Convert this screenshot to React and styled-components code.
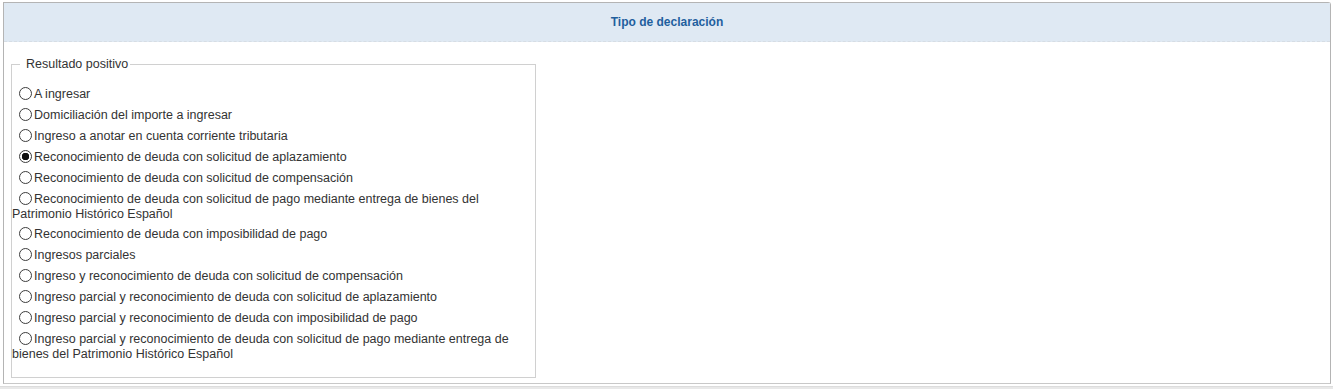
import styled, { createGlobalStyle } from 'styled-components';

const GlobalStyle = createGlobalStyle`
  html, body {
    margin: 0;
    padding: 0;
    background: #fff;
    font-family: "Liberation Sans", Arial, sans-serif;
  }
`;

const options = [
  'A ingresar',
  'Domiciliación del importe a ingresar',
  'Ingreso a anotar en cuenta corriente tributaria',
  'Reconocimiento de deuda con solicitud de aplazamiento',
  'Reconocimiento de deuda con solicitud de compensación',
  'Reconocimiento de deuda con solicitud de pago mediante entrega de bienes del Patrimonio Histórico Español',
  'Reconocimiento de deuda con imposibilidad de pago',
  'Ingresos parciales',
  'Ingreso y reconocimiento de deuda con solicitud de compensación',
  'Ingreso parcial y reconocimiento de deuda con solicitud de aplazamiento',
  'Ingreso parcial y reconocimiento de deuda con imposibilidad de pago',
  'Ingreso parcial y reconocimiento de deuda con solicitud de pago mediante entrega de bienes del Patrimonio Histórico Español',
];

const Panel = styled.section`
  margin: 2px 2px 0 3px;
  border: 1px solid #b4b4b4;
  border-bottom-color: #c8c8c8;
  border-radius: 0 3px 0 0;
`;

const Header = styled.div`
  height: 38px;
  display: flex;
  align-items: center;
  justify-content: center;
  background: #dfe9f3;
  border-bottom: 1px dashed #d6dde4;
  color: #1f5f9e;
  font-size: 12px;
  font-weight: bold;
`;

const Body = styled.div`
  padding: 15px 0 5px 7px;
`;

const Group = styled.fieldset`
  width: 525px;
  box-sizing: border-box;
  margin: 0;
  padding: 10px 10px 16px 0;
  border: 1px solid #d0d0d0;
  min-inline-size: 0;
`;

const Legend = styled.legend`
  margin-left: 8px;
  padding: 0 2px 0 6px;
  font-size: 12.5px;
  color: #333;
  line-height: 14px;
`;

const Option = styled.label`
  display: block;
  margin-top: 6px;
  font-size: 12.5px;
  line-height: 14px;
  color: #333;
  cursor: pointer;
`;

const Radio = styled.input.attrs({ type: 'radio', name: 'tipo' })`
  appearance: none;
  -webkit-appearance: none;
  display: inline-block;
  vertical-align: -4px;
  width: 13px;
  height: 13px;
  margin: 0 2px 2px 7px;
  border: 1px solid #3c3c3c;
  border-radius: 50%;
  background: #fff;
  box-sizing: border-box;

  &:checked {
    background: radial-gradient(circle, #111 0 3.5px, #fff 4px);
  }
`;

const Strip = styled.div`
  margin: 2px 0 0 0;
  height: 4px;
  background: #e8e8e8;
  border-top: 1px solid #dcdcdc;
`;

export default function App() {
  return (
    <>
      <GlobalStyle />
      <Panel>
        <Header>Tipo de declaración</Header>
        <Body>
          <Group>
            <Legend>Resultado positivo</Legend>
            {options.map((text, i) => (
              <Option key={text}>
                <Radio defaultChecked={i === 3} />
                {text}
              </Option>
            ))}
          </Group>
        </Body>
      </Panel>
      <Strip />
    </>
  );
}
